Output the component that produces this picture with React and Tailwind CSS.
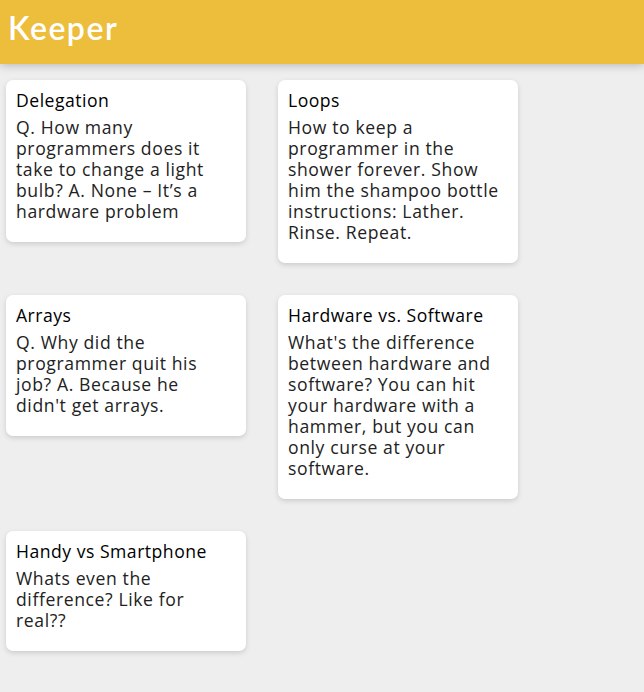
import React from 'react';

const notes = [
  {
    title: 'Delegation',
    lines: ['Q. How many', 'programmers does it', 'take to change a light', 'bulb? A. None – It’s a', 'hardware problem'],
  },
  {
    title: 'Loops',
    lines: ['How to keep a', 'programmer in the', 'shower forever. Show', 'him the shampoo bottle', 'instructions: Lather.', 'Rinse. Repeat.'],
  },
  {
    title: 'Arrays',
    lines: ['Q. Why did the', 'programmer quit his', 'job? A. Because he', "didn't get arrays."],
  },
  {
    title: 'Hardware vs. Software',
    lines: ["What's the difference", 'between hardware and', 'software? You can hit', 'your hardware with a', 'hammer, but you can', 'only curse at your', 'software.'],
  },
  {
    title: 'Handy vs Smartphone',
    lines: ['Whats even the', 'difference? Like for', 'real??'],
  },
];

const Note = ({ title, lines }) => (
  <div className="w-[240px] bg-white rounded-[7px] shadow-[0_2px_5px_#ccc] p-[10px]">
    <h1 className="text-[17.6px] leading-[21px] font-medium text-black mb-[6px] whitespace-nowrap tracking-[0.5px]">{title}</h1>
    <p className="text-[17.6px] leading-[21px] text-[#222] mb-[10px] tracking-[0.6px] whitespace-pre">
      {lines.join('\n')}
    </p>
  </div>
);

const App = () => {
  return (
    <div className="min-h-screen bg-[#eeeeee] font-['Open_Sans',sans-serif]">
      <header className="h-[64px] bg-[#edbd3c] shadow-[0_0_10px_0_rgba(0,0,0,0.3)] px-[8px] flex items-center relative">
        <h1 className="text-[32px] text-white font-semibold leading-none tracking-[1.5px] font-['Lato',sans-serif] -mt-[8px]">Keeper</h1>
      </header>
      <main className="w-[550px] pl-[6px] pt-[16px] pb-[32px] flex flex-wrap items-start gap-[32px]">
        {notes.map((n) => (
          <Note key={n.title} {...n} />
        ))}
      </main>
    </div>
  );
};

export default App;
